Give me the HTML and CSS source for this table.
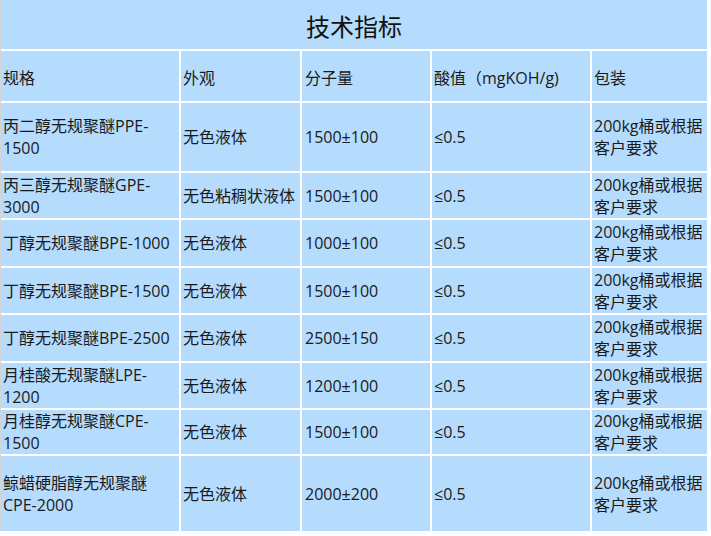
FILE: index.html
```html
<!DOCTYPE html>
<html lang="zh-CN">
<head>
<meta charset="utf-8">
<title>技术指标</title>
<link rel="stylesheet" href="styles.css">
</head>
<body>
<div class="spec">
  <div class="cell title">技术指标</div>

  <div class="row head">
    <div class="cell">规格</div>
    <div class="cell">外观</div>
    <div class="cell c3">分子量</div>
    <div class="cell">酸值（mgKOH/g)</div>
    <div class="cell">包装</div>
  </div>

  <div class="row">
    <div class="cell">丙二醇无规聚醚PPE-1500</div>
    <div class="cell">无色液体</div>
    <div class="cell c3">1500±100</div>
    <div class="cell">≤0.5</div>
    <div class="cell">200kg桶或根据客户要求</div>
  </div>

  <div class="row">
    <div class="cell">丙三醇无规聚醚GPE-3000</div>
    <div class="cell">无色粘稠状液体</div>
    <div class="cell c3">1500±100</div>
    <div class="cell">≤0.5</div>
    <div class="cell">200kg桶或根据客户要求</div>
  </div>

  <div class="row">
    <div class="cell">丁醇无规聚醚BPE-1000</div>
    <div class="cell">无色液体</div>
    <div class="cell c3">1000±100</div>
    <div class="cell">≤0.5</div>
    <div class="cell">200kg桶或根据客户要求</div>
  </div>

  <div class="row">
    <div class="cell">丁醇无规聚醚BPE-1500</div>
    <div class="cell">无色液体</div>
    <div class="cell c3">1500±100</div>
    <div class="cell">≤0.5</div>
    <div class="cell">200kg桶或根据客户要求</div>
  </div>

  <div class="row">
    <div class="cell">丁醇无规聚醚BPE-2500</div>
    <div class="cell">无色液体</div>
    <div class="cell c3">2500±150</div>
    <div class="cell">≤0.5</div>
    <div class="cell">200kg桶或根据客户要求</div>
  </div>

  <div class="row">
    <div class="cell">月桂酸无规聚醚LPE-1200</div>
    <div class="cell">无色液体</div>
    <div class="cell c3">1200±100</div>
    <div class="cell">≤0.5</div>
    <div class="cell">200kg桶或根据客户要求</div>
  </div>

  <div class="row">
    <div class="cell">月桂醇无规聚醚CPE-1500</div>
    <div class="cell">无色液体</div>
    <div class="cell c3">1500±100</div>
    <div class="cell">≤0.5</div>
    <div class="cell">200kg桶或根据客户要求</div>
  </div>

  <div class="row">
    <div class="cell">鲸蜡硬脂醇无规聚醚CPE-2000</div>
    <div class="cell">无色液体</div>
    <div class="cell c3">2000±200</div>
    <div class="cell">≤0.5</div>
    <div class="cell">200kg桶或根据客户要求</div>
  </div>
</div>
</body>
</html>
```

FILE: styles.css
```css
html, body {
  margin: 0;
  padding: 0;
  background: #ffffff;
}

body {
  font-family: "Open Sans", "Noto Sans CJK SC", sans-serif;
  font-size: 16px;
  color: #1a1a1a;
}

.spec {
  display: grid;
  grid-template-columns: 178px 119px 128px 158px 115px;
  grid-template-rows: 49px 50px 68px 45px 46px 45px 46px 45px 44px 75px;
  gap: 2px;
  width: 708px;
  background: #ffffff;
  border-left: 1px solid #d4d4d4;
}

.row {
  display: contents;
}

.cell {
  background: #b5dcfd;
  display: flex;
  align-items: center;
  padding: 0 2px;
  line-height: 22px;
  word-break: normal;
  overflow-wrap: break-word;
}

.cell.c3 {
  padding-left: 3px;
}

.title {
  grid-column: 1 / -1;
  justify-content: center;
  font-size: 24px;
  padding-top: 4px;
  color: #111111;
}

.head .cell {
  padding-top: 3px;
}
```
